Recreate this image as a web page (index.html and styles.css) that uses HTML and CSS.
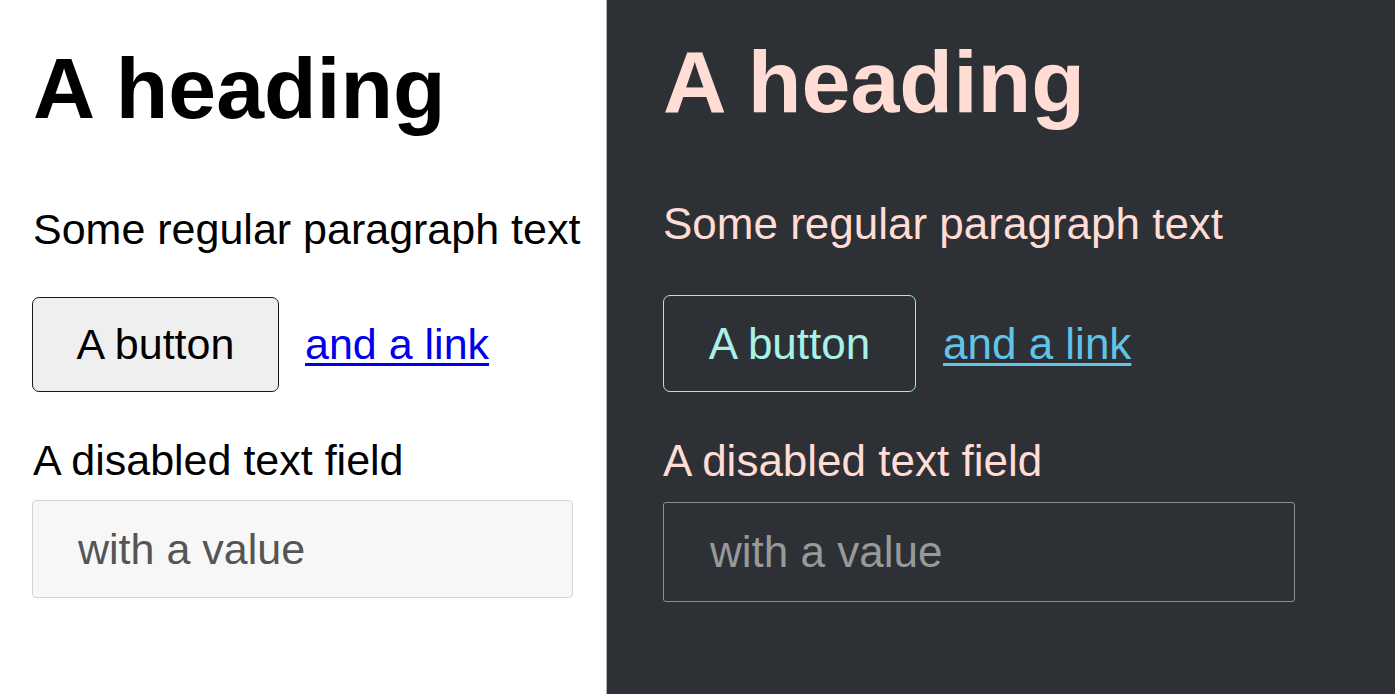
FILE: index.html
```html
<!DOCTYPE html>
<html lang="en">
<head>
<meta charset="utf-8">
<title>Theme demo</title>
<link rel="stylesheet" href="styles.css">
</head>
<body>
<div class="panels">
  <section class="panel light">
    <h1 class="heading">A heading</h1>
    <p class="para">Some regular paragraph text</p>
    <div class="actions">
      <button class="btn" type="button">A button</button>
      <a class="link" href="#">and a link</a>
    </div>
    <label class="label" for="f1">A disabled text field</label>
    <input class="field" id="f1" type="text" value="with a value" disabled>
  </section>
  <section class="panel dark">
    <h1 class="heading">A heading</h1>
    <p class="para">Some regular paragraph text</p>
    <div class="actions">
      <button class="btn" type="button">A button</button>
      <a class="link" href="#">and a link</a>
    </div>
    <label class="label" for="f2">A disabled text field</label>
    <input class="field" id="f2" type="text" value="with a value" disabled>
  </section>
</div>
</body>
</html>
```

FILE: styles.css
```css
html, body {
  margin: 0;
  padding: 0;
  height: 100%;
}
body {
  font-family: "Liberation Sans", Arial, sans-serif;
  overflow: hidden;
}
.panels {
  display: flex;
  height: 100%;
}
.panel {
  display: flex;
  flex-direction: column;
  align-items: flex-start;
  box-sizing: border-box;
}
.heading {
  margin: 0;
  font-weight: bold;
  line-height: normal;
}
.para {
  margin: 0;
  line-height: normal;
}
.actions {
  display: flex;
  align-items: center;
}
.btn {
  font-family: "Liberation Sans", Arial, sans-serif;
  line-height: normal;
  box-sizing: border-box;
  margin: 0;
  cursor: pointer;
}
.link {
  line-height: normal;
  text-decoration: underline;
  text-decoration-thickness: 3px;
  text-underline-offset: 4px;
}
.label {
  line-height: normal;
  display: block;
}
.field {
  font-family: "Liberation Sans", Arial, sans-serif;
  box-sizing: border-box;
  margin: 0;
  outline: none;
  opacity: 1;
}

/* Light panel */
.light {
  width: 606px;
  background: #ffffff;
  color: #000000;
  padding: 39px 0 0 33px;
}
.light .heading {
  font-size: 86px;
}
.light .para {
  font-size: 43px;
  margin-top: 67px;
}
.light .actions {
  margin-top: 43px;
  gap: 26px;
}
.light .btn {
  font-size: 43px;
  width: 247px;
  height: 95px;
  margin-left: -1px;
  background: #efefef;
  border: 1.5px solid #1a1a1a;
  border-radius: 7px;
  color: #000;
  padding: 0;
}
.light .link {
  font-size: 43px;
  color: #0000ee;
}
.light .label {
  font-size: 43px;
  margin-top: 44px;
}
.light .field {
  font-size: 43px;
  margin-top: 15px;
  margin-left: -1px;
  width: 541px;
  height: 98px;
  padding: 0 0 0 45px;
  background: #f7f7f7;
  border: 1.5px solid #d4d4d4;
  border-radius: 4px;
  color: #555555;
  -webkit-text-fill-color: #555555;
}

/* Dark panel */
.dark {
  flex: 1;
  background: #2d3136;
  border-left: 1px solid #b5b5b5;
  color: #ffdcd4;
  padding: 31px 0 0 56px;
}
.dark .heading {
  font-size: 88px;
  color: #ffdcd4;
}
.dark .para {
  font-size: 44px;
  margin-top: 66px;
}
.dark .actions {
  margin-top: 46px;
  gap: 27px;
}
.dark .btn {
  font-size: 44px;
  width: 253px;
  height: 97px;
  background: transparent;
  border: 1.5px solid #a6e9e1;
  border-radius: 7px;
  color: #a9f1e8;
  padding: 0;
}
.dark .link {
  font-size: 44px;
  color: #62c3e6;
}
.dark .label {
  font-size: 44px;
  margin-top: 44px;
}
.dark .field {
  font-size: 44px;
  margin-top: 16px;
  width: 632px;
  height: 100px;
  padding: 0 0 0 46px;
  background: transparent;
  border: 1.5px solid #8c8e90;
  border-radius: 3px;
  color: #98999a;
  -webkit-text-fill-color: #98999a;
}
```
